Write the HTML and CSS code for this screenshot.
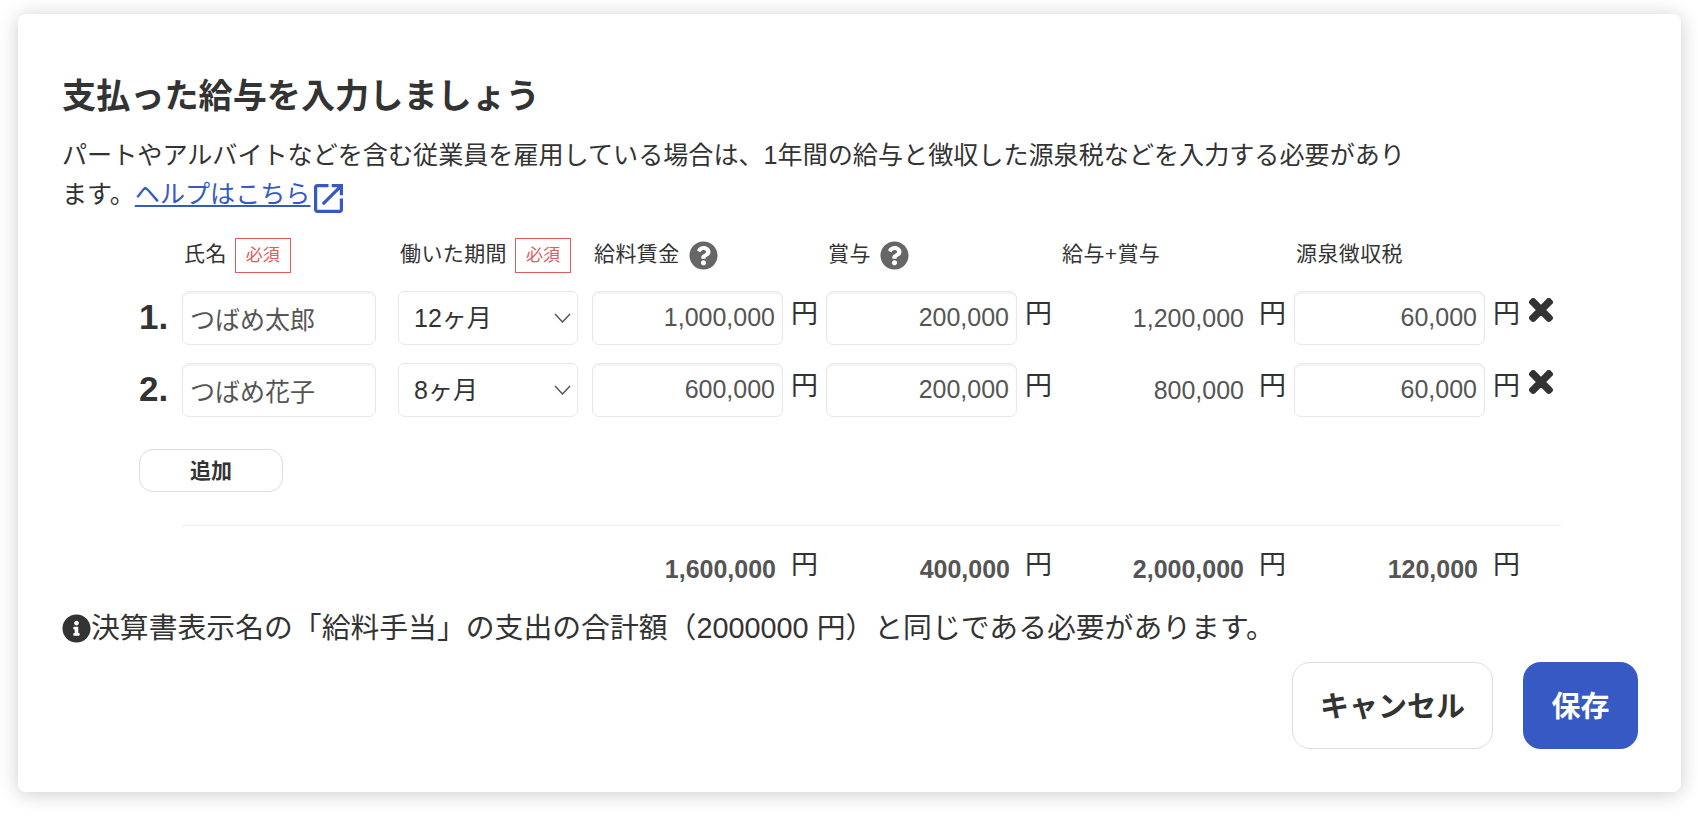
FILE: index.html
```html
<!DOCTYPE html>
<html lang="ja">
<head>
    <meta charset="UTF-8">
    <meta name="viewport" content="width=device-width, initial-scale=1.0">
    <title>支払った給与</title>
    <link rel="stylesheet" href="styles.css">
</head>
<body>
    <div class="card">
        <h2 class="title">支払った給与を入力しましょう</h2>
        <p class="lead">パートやアルバイトなどを含む従業員を雇用している場合は、1年間の給与と徴収した源泉税などを入力する必要があります。<a class="help-link" href="#">ヘルプはこちら</a><svg class="ext-icon" viewBox="3 3 18 18"><path d="M19 19H5V5h7V3H5c-1.11 0-2 .9-2 2v14c0 1.1.89 2 2 2h14c1.1 0 2-.9 2-2v-7h-2v7zM14 3v2h3.59l-9.83 9.83 1.41 1.41L19 6.41V10h2V3h-7z"/></svg></p>

        <div class="table">
            <div class="row head">
                <div></div>
                <div class="label">氏名<span class="required">必須</span></div>
                <div class="label">働いた期間<span class="required">必須</span></div>
                <div class="label">給料賃金<svg class="help-icon" viewBox="0 0 512 512"><path d="M504 256c0 136.997-111.043 248-248 248S8 392.997 8 256C8 119.083 119.043 8 256 8s248 111.083 248 248zM262.655 90c-54.497 0-89.255 22.957-116.549 63.758-3.536 5.286-2.353 12.415 2.715 16.258l34.699 26.31c5.205 3.947 12.621 3.008 16.665-2.122 17.864-22.658 30.113-35.797 57.303-35.797 20.429 0 45.698 13.148 45.698 32.958 0 14.976-12.363 22.667-32.534 33.976C247.128 238.528 216 254.941 216 296v4c0 6.627 5.373 12 12 12h56c6.627 0 12-5.373 12-12v-1.333c0-28.462 83.186-29.647 83.186-106.667 0-58.002-60.165-102-116.531-102zM256 338c-25.365 0-46 20.635-46 46 0 25.364 20.635 46 46 46s46-20.636 46-46c0-25.365-20.635-46-46-46z"/></svg></div>
                <div class="label">賞与<svg class="help-icon" viewBox="0 0 512 512"><path d="M504 256c0 136.997-111.043 248-248 248S8 392.997 8 256C8 119.083 119.043 8 256 8s248 111.083 248 248zM262.655 90c-54.497 0-89.255 22.957-116.549 63.758-3.536 5.286-2.353 12.415 2.715 16.258l34.699 26.31c5.205 3.947 12.621 3.008 16.665-2.122 17.864-22.658 30.113-35.797 57.303-35.797 20.429 0 45.698 13.148 45.698 32.958 0 14.976-12.363 22.667-32.534 33.976C247.128 238.528 216 254.941 216 296v4c0 6.627 5.373 12 12 12h56c6.627 0 12-5.373 12-12v-1.333c0-28.462 83.186-29.647 83.186-106.667 0-58.002-60.165-102-116.531-102zM256 338c-25.365 0-46 20.635-46 46 0 25.364 20.635 46 46 46s46-20.636 46-46c0-25.365-20.635-46-46-46z"/></svg></div>
                <div class="label">給与+賞与</div>
                <div class="label">源泉徴収税</div>
            </div>

            <div class="row">
                <div class="num">1.</div>
                <div><input class="field name" type="text" value="つばめ太郎"></div>
                <div class="select-wrap">
                    <select class="select"><option>12ヶ月</option><option>8ヶ月</option></select>
                    <svg class="chevron" viewBox="0 0 17 10"><path d="M1 1l7.5 8L16 1"/></svg>
                </div>
                <div class="money"><input class="field amount" type="text" value="1,000,000"><span class="yen">円</span></div>
                <div class="money"><input class="field amount" type="text" value="200,000"><span class="yen">円</span></div>
                <div class="money sum"><span class="value">1,200,000</span><span class="yen">円</span></div>
                <div class="money"><input class="field amount" type="text" value="60,000"><span class="yen">円</span></div>
                <svg class="remove" viewBox="-12 68 376 376"><path d="M242.72 256l100.07-100.07c12.28-12.28 12.28-32.19 0-44.48l-22.24-22.24c-12.28-12.28-32.19-12.28-44.48 0L176 189.28 75.93 89.21c-12.28-12.28-32.19-12.28-44.48 0L9.21 111.45c-12.28 12.28-12.28 32.19 0 44.48L109.28 256 9.21 356.07c-12.28 12.28-12.28 32.19 0 44.48l22.24 22.24c12.28 12.28 32.2 12.28 44.48 0L176 322.72l100.07 100.07c12.28 12.28 32.2 12.28 44.48 0l22.24-22.24c12.28-12.28 12.28-32.19 0-44.48L242.72 256z"/></svg>
            </div>

            <div class="row">
                <div class="num">2.</div>
                <div><input class="field name" type="text" value="つばめ花子"></div>
                <div class="select-wrap">
                    <select class="select"><option>8ヶ月</option><option>12ヶ月</option></select>
                    <svg class="chevron" viewBox="0 0 17 10"><path d="M1 1l7.5 8L16 1"/></svg>
                </div>
                <div class="money"><input class="field amount" type="text" value="600,000"><span class="yen">円</span></div>
                <div class="money"><input class="field amount" type="text" value="200,000"><span class="yen">円</span></div>
                <div class="money sum"><span class="value">800,000</span><span class="yen">円</span></div>
                <div class="money"><input class="field amount" type="text" value="60,000"><span class="yen">円</span></div>
                <svg class="remove" viewBox="-12 68 376 376"><path d="M242.72 256l100.07-100.07c12.28-12.28 12.28-32.19 0-44.48l-22.24-22.24c-12.28-12.28-32.19-12.28-44.48 0L176 189.28 75.93 89.21c-12.28-12.28-32.19-12.28-44.48 0L9.21 111.45c-12.28 12.28-12.28 32.19 0 44.48L109.28 256 9.21 356.07c-12.28 12.28-12.28 32.19 0 44.48l22.24 22.24c12.28 12.28 32.2 12.28 44.48 0L176 322.72l100.07 100.07c12.28 12.28 32.2 12.28 44.48 0l22.24-22.24c12.28-12.28 12.28-32.19 0-44.48L242.72 256z"/></svg>
            </div>

            <button class="add-btn">追加</button>
            <div class="divider"></div>

            <div class="row total">
                <div></div>
                <div></div>
                <div></div>
                <div class="money sum"><span class="value">1,600,000</span><span class="yen">円</span></div>
                <div class="money sum"><span class="value">400,000</span><span class="yen">円</span></div>
                <div class="money sum"><span class="value">2,000,000</span><span class="yen">円</span></div>
                <div class="money sum"><span class="value">120,000</span><span class="yen">円</span></div>
            </div>
        </div>

        <div class="notice">
            <svg class="info-icon" viewBox="0 0 512 512"><path d="M256 8C119.043 8 8 119.083 8 256c0 136.997 111.043 248 248 248s248-111.003 248-248C504 119.083 392.957 8 256 8zm0 110c23.196 0 42 18.804 42 42s-18.804 42-42 42-42-18.804-42-42 18.804-42 42-42zm56 254c0 6.627-5.373 12-12 12h-88c-6.627 0-12-5.373-12-12v-24c0-6.627 5.373-12 12-12h12v-64h-12c-6.627 0-12-5.373-12-12v-24c0-6.627 5.373-12 12-12h64c6.627 0 12 5.373 12 12v100h12c6.627 0 12 5.373 12 12v24z"/></svg>
            <span>決算書表示名の「給料手当」の支出の合計額（2000000 円）と同じである必要があります。</span>
        </div>

        <div class="actions">
            <button class="btn cancel">キャンセル</button>
            <button class="btn save">保存</button>
        </div>
    </div>
</body>
</html>
```

FILE: styles.css
```css
* {
box-sizing: border-box;
}

body {
margin: 0;
min-height: 816px;
padding-top: 14px;
background: #fff;
color: #333;
font-family: "Liberation Sans", "Noto Sans CJK JP", sans-serif;
}

.card {
margin: 0 17px 0 18px;
padding: 61px 43px 43px 44px;
background: #fff;
border-radius: 8px;
box-shadow: 0 2px 20px rgba(0, 0, 0, 0.2);
}

.title {
margin: 0;
font-size: 34.15px;
line-height: 42px;
font-weight: bold;
}

.lead {
margin: 19px 0 0;
max-width: 1355px;
font-size: 25.1px;
line-height: 39px;
}

.help-link {
color: #3659c4;
}

.ext-icon {
width: 29px;
height: 29px;
margin-left: 4px;
vertical-align: -10px;
fill: #3659c4;
}

.table {
margin: 24px 0 0 77px;
}

.row {
display: grid;
grid-template-columns: 43px 216px 194px 234px 234px 234px 234px 26px;
align-items: start;
margin-bottom: 18px;
}

.head {
height: 35px;
}

.label {
display: flex;
align-items: flex-start;
height: 35px;
padding-left: 2px;
font-size: 21px;
letter-spacing: 0.4px;
line-height: 32px;
white-space: nowrap;
}

.required {
width: 56px;
height: 35px;
margin-left: 8px;
border: 1px solid #e05c5c;
color: #e05c5c;
font-size: 17px;
letter-spacing: 0;
line-height: 33px;
text-align: center;
}

.help-icon {
width: 29px;
height: 29px;
margin: 3px 0 0 9px;
fill: #666;
}

.num {
font-size: 35px;
font-weight: bold;
line-height: 52px;
}

.field {
display: block;
height: 54px;
border: 1px solid #e8e8e8;
border-radius: 7px;
background: #fff;
box-shadow: inset 0 2px 2px rgba(0, 0, 0, 0.05);
color: #555;
font-family: inherit;
font-size: 25px;
padding: 0 7px 1px;
outline: none;
}

.name {
width: 194px;
}

.amount {
width: 191px;
text-align: right;
}

.select-wrap {
position: relative;
width: 180px;
}

.select {
display: block;
width: 100%;
height: 54px;
padding: 0 0 1px 15px;
border: 1px solid #e8e8e8;
border-radius: 7px;
background: #fff;
color: #333;
font-family: inherit;
font-size: 25px;
appearance: none;
-webkit-appearance: none;
}

.chevron {
position: absolute;
top: 22px;
right: 7px;
width: 17px;
height: 10px;
fill: none;
stroke: #555;
stroke-width: 1.5;
}

.money {
display: flex;
align-items: flex-start;
gap: 8px;
}

.yen {
margin-top: 8px;
font-size: 27px;
line-height: 30px;
}

.sum {
gap: 15px;
}

.value {
width: 184px;
color: #555;
font-size: 25px;
line-height: 54px;
text-align: right;
}

.remove {
width: 24px;
height: 24px;
margin: 7px 0 0 1px;
fill: #333;
stroke: #333;
stroke-width: 22;
stroke-linejoin: round;
}

.add-btn {
display: block;
width: 144px;
height: 43px;
margin-top: 32px;
padding: 0 0 3px;
border: 1px solid #ddd;
border-radius: 14px;
background: #fff;
color: #333;
font-family: inherit;
font-size: 21px;
font-weight: bold;
}

.divider {
height: 1px;
margin: 33px 77px 0 43px;
background: #eee;
}

.total {
margin: 16px 0 0;
}

.total .value {
font-weight: bold;
}

.notice {
display: flex;
align-items: center;
gap: 0;
margin-top: 11px;
font-size: 28.83px;
line-height: 42px;
}

.info-icon {
width: 29px;
height: 29px;
fill: #333;
}

.actions {
display: flex;
justify-content: flex-end;
gap: 30px;
margin-top: 13px;
}

.btn {
height: 87px;
padding: 0 0 4px;
border-radius: 18px;
font-family: inherit;
font-size: 29px;
font-weight: bold;
}

.cancel {
width: 201px;
border: 1px solid #ddd;
background: #fff;
color: #333;
}

.save {
width: 115px;
border: none;
background: #3659c4;
color: #fff;
}
```
